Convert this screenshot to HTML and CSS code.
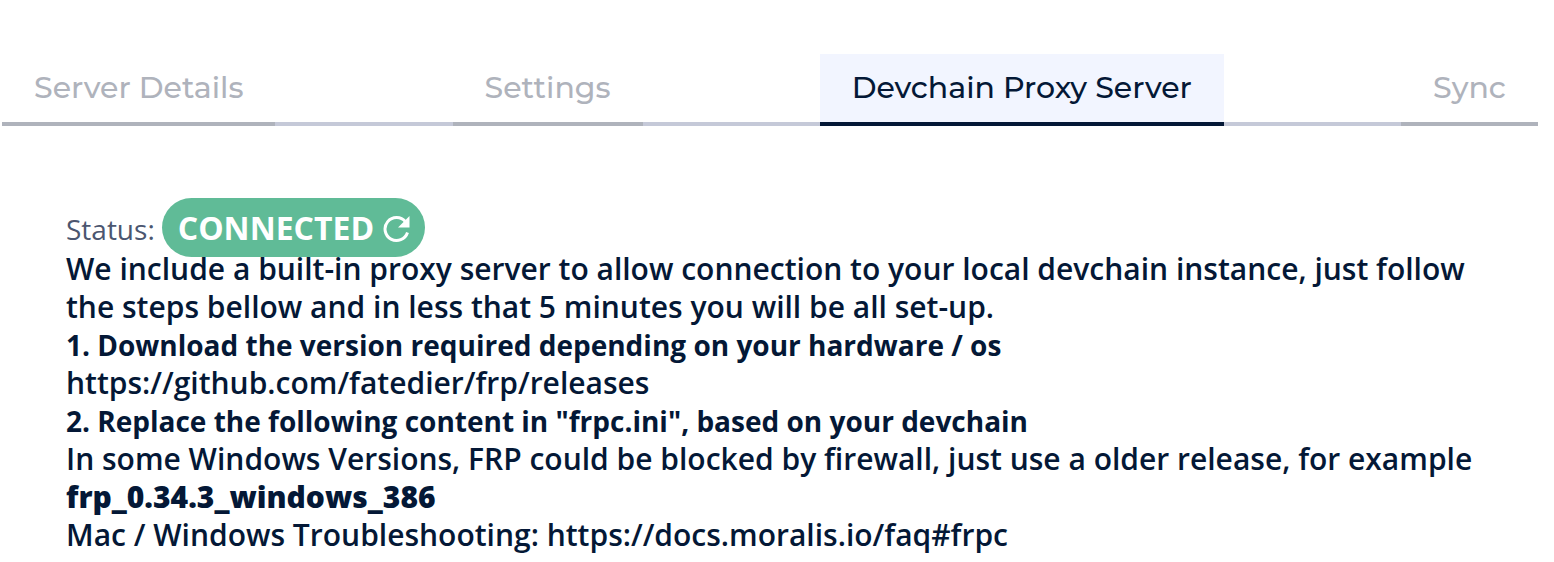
FILE: index.html
```html
<!DOCTYPE html>
<html lang="en">
<head>
<meta charset="utf-8">
<title>Devchain Proxy Server</title>
<link rel="stylesheet" href="styles.css">
</head>
<body>
<nav class="tabs">
  <button class="tab" type="button">Server Details</button>
  <button class="tab" type="button">Settings</button>
  <button class="tab active" type="button">Devchain Proxy Server</button>
  <button class="tab" type="button">Sync</button>
</nav>
<main class="panel">
  <div class="status">
    <span class="label">Status:</span>
    <button class="badge" type="button">CONNECTED
      <svg class="icon" viewBox="0 0 28 28" aria-hidden="true"><path d="M23.500 6.800A11.500 11.500 0 1 0 25.500 17.500" fill="none" stroke="currentColor" stroke-width="3"/><path d="M27.500 1v11.500H16z" fill="currentColor"/></svg>
    </button>
  </div>
  <p>We include a built-in proxy server to allow connection to your local devchain instance, just follow the steps bellow and in less that 5 minutes you will be all set-up.</p>
  <h2>1. Download the version required depending on your hardware / os</h2>
  <p><a href="https://github.com/fatedier/frp/releases">https://github.com/fatedier/frp/releases</a></p>
  <h2>2. Replace the following content in "frpc.ini", based on your devchain</h2>
  <p>In some Windows Versions, FRP could be blocked by firewall, just use a older release, for example <strong>frp_0.34.3_windows_386</strong></p>
  <p>Mac / Windows Troubleshooting: <a href="https://docs.moralis.io/faq#frpc">https://docs.moralis.io/faq#frpc</a></p>
</main>
</body>
</html>
```
FILE: styles.css
```css
* { box-sizing: border-box; }
body {
  margin: 0;
  background: #fff;
  color: #041836;
  font-family: "Open Sans", "Noto Sans", sans-serif;
}
.tabs {
  display: flex;
  justify-content: space-between;
  margin: 54px 16px 0 2px;
  background: linear-gradient(#c5c9d8, #c5c9d8) bottom / 100% 4px no-repeat;
}
.tab {
  height: 72px;
  padding: 0 32px;
  border: 0;
  border-bottom: 4px solid #afb3bc;
  background: none;
  color: #afb3bc;
  font: 500 30px/36px Montserrat, "Open Sans", sans-serif;
  white-space: nowrap;
}
.tab.active {
  border-color: #041836;
  background: #f2f5ff;
  color: #041836;
}
.panel { padding: 72px 64px 0 66px; }
.status {
  display: flex;
  align-items: center;
  gap: 7px;
  height: 52px;
}
.label {
  padding-top: 10px;
  color: #4b5670;
  font-size: 28px;
  line-height: 40px;
}
.badge {
  display: flex;
  align-items: center;
  gap: 8px;
  height: 59px;
  margin-top: 7px;
  padding: 0 15px 0 16px;
  border: 0;
  border-radius: 30px;
  background: #60bb97;
  color: #fff;
  font: 700 32px/44px "Open Sans", sans-serif;
}
.icon {
  width: 28px;
  height: 28px;
  margin-top: 2px;
}
p, h2 {
  margin: 0;
  font-size: 30px;
  font-weight: 600;
  line-height: 38px;
}
h2 { font-size: 28px; font-weight: 700; }
strong { font-weight: 800; }
a { color: inherit; text-decoration: none; }
```
